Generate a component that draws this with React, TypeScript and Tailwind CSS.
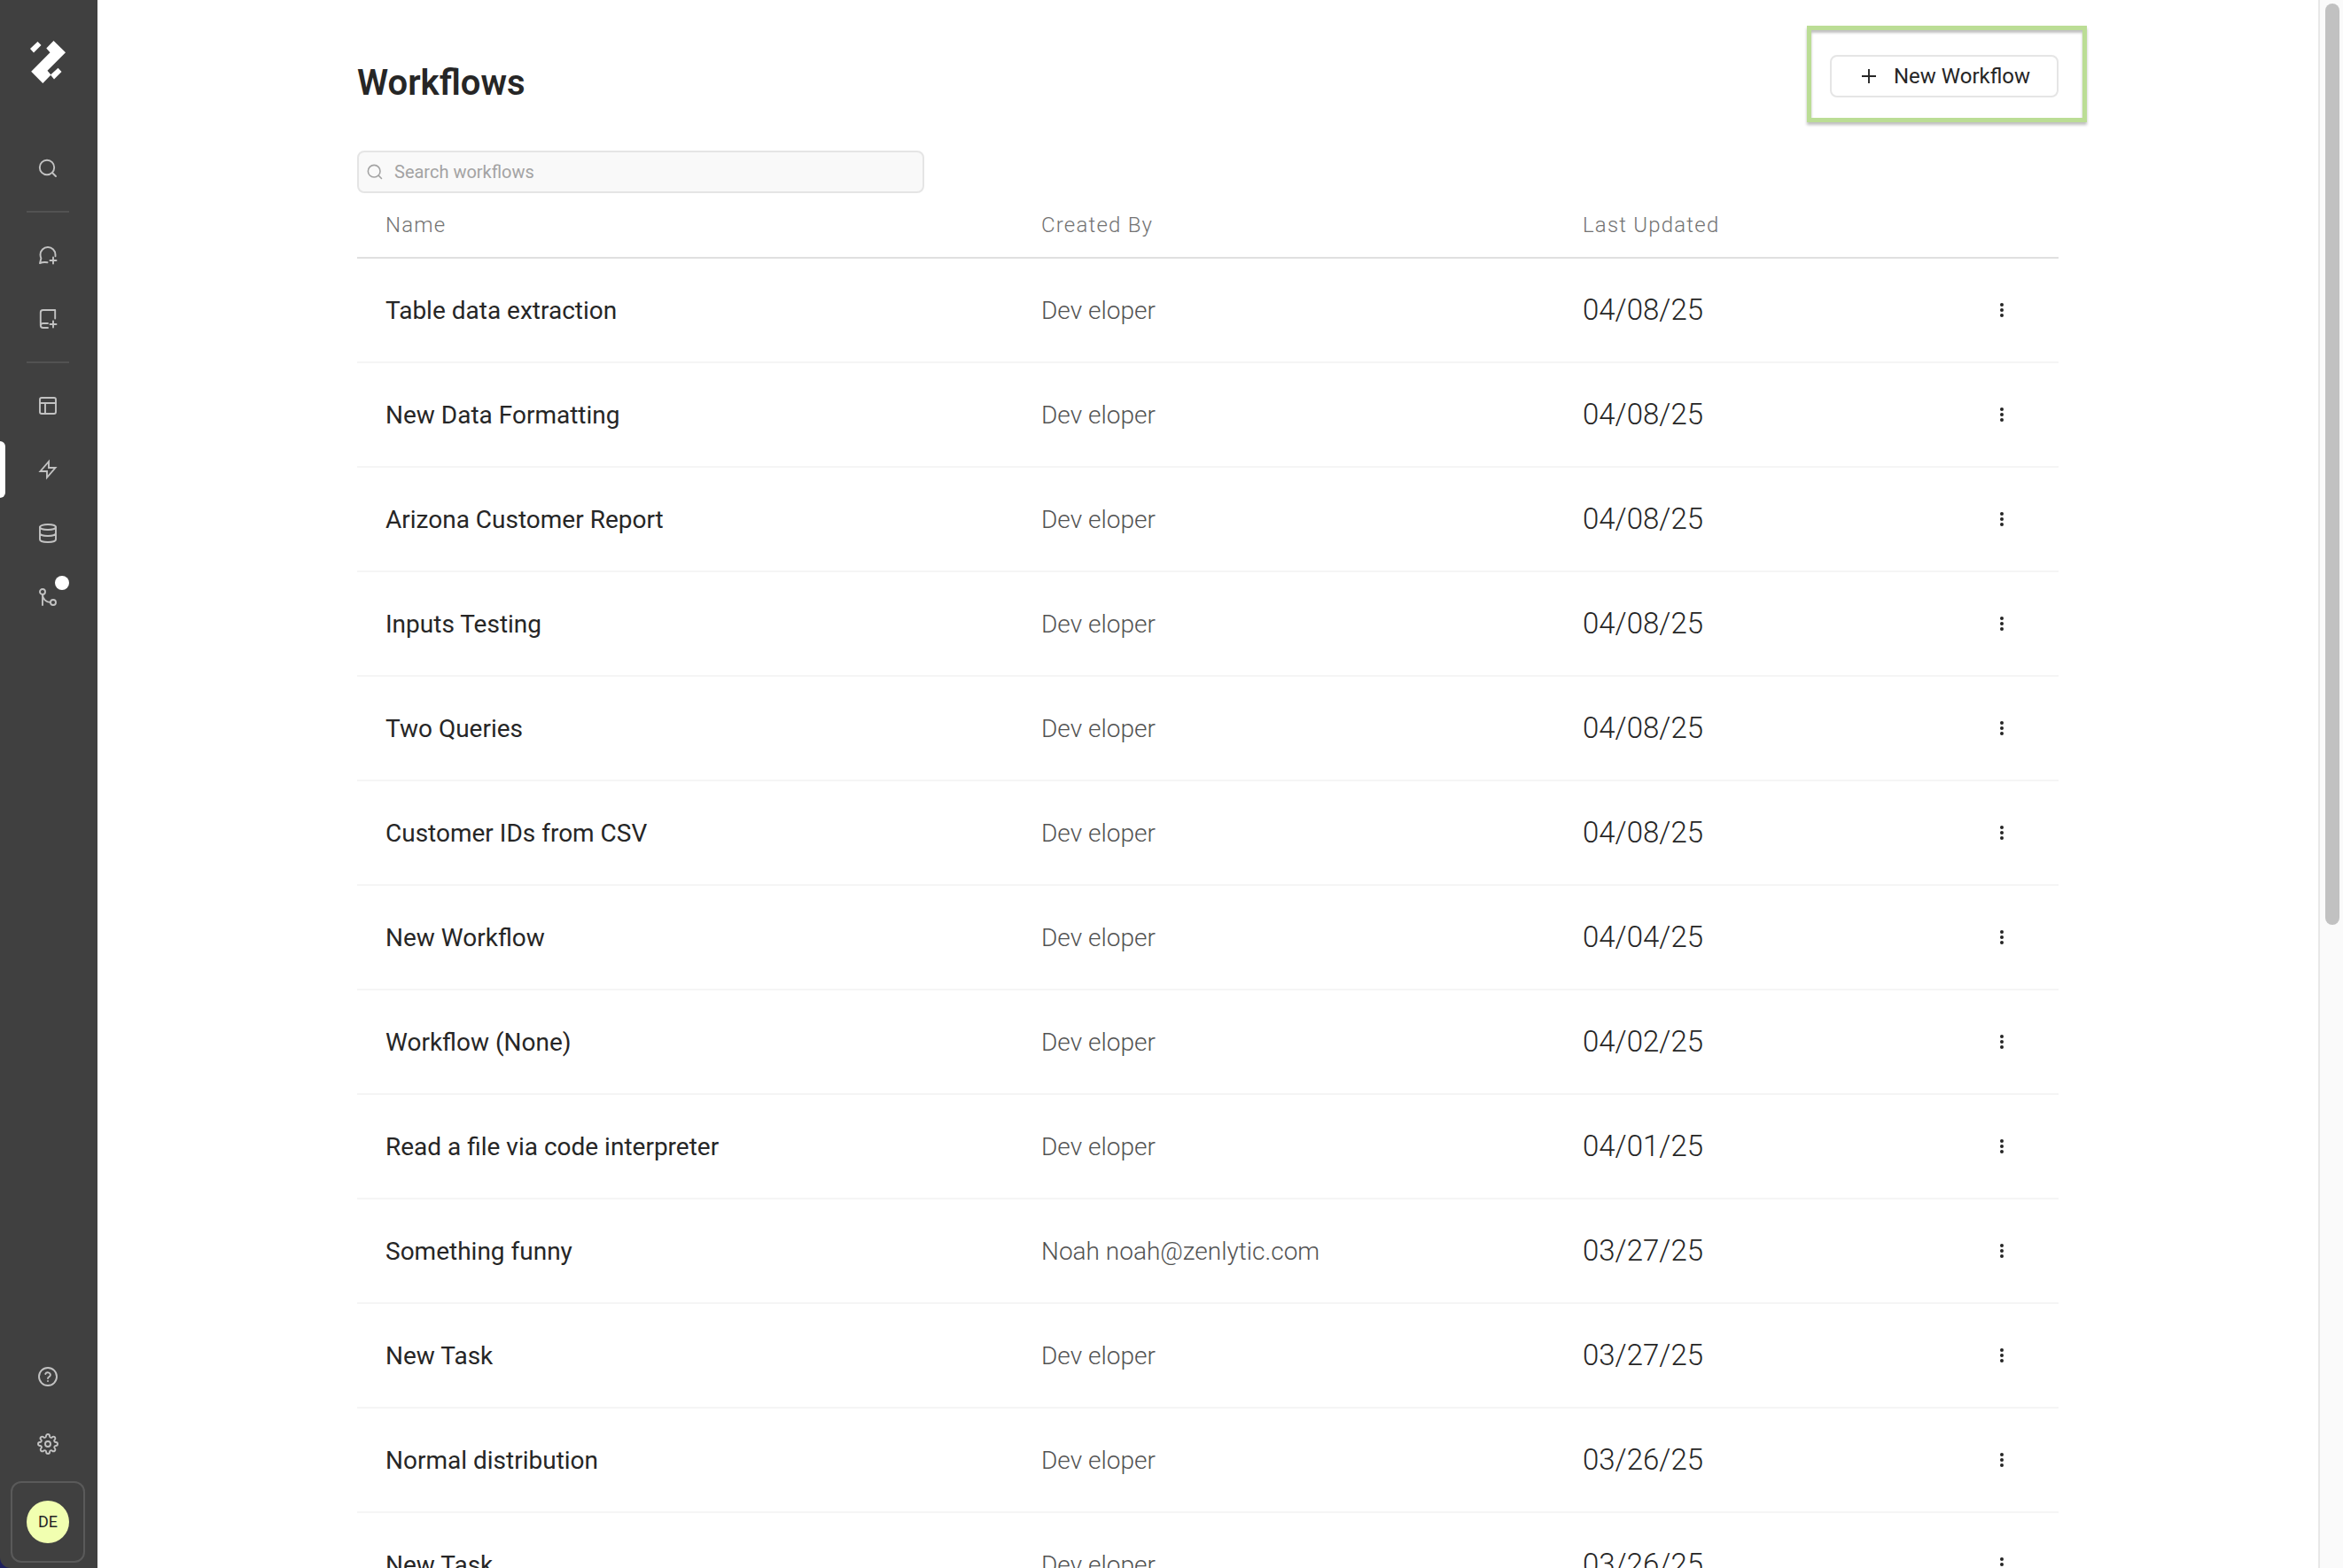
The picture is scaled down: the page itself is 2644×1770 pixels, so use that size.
import { useState } from "react";
import type { ReactNode } from "react";

const workflows = [
  { name: "Table data extraction", by: "Dev eloper", date: "04/08/25" },
  { name: "New Data Formatting", by: "Dev eloper", date: "04/08/25" },
  { name: "Arizona Customer Report", by: "Dev eloper", date: "04/08/25" },
  { name: "Inputs Testing", by: "Dev eloper", date: "04/08/25" },
  { name: "Two Queries", by: "Dev eloper", date: "04/08/25" },
  { name: "Customer IDs from CSV", by: "Dev eloper", date: "04/08/25" },
  { name: "New Workflow", by: "Dev eloper", date: "04/04/25" },
  { name: "Workflow (None)", by: "Dev eloper", date: "04/02/25" },
  { name: "Read a file via code interpreter", by: "Dev eloper", date: "04/01/25" },
  { name: "Something funny", by: "Noah noah@zenlytic.com", date: "03/27/25" },
  { name: "New Task", by: "Dev eloper", date: "03/27/25" },
  { name: "Normal distribution", by: "Dev eloper", date: "03/26/25" },
  { name: "New Task", by: "Dev eloper", date: "03/26/25" },
];

function Icon({ children, className = "size-6" }: { children: ReactNode; className?: string }) {
  return (
    <svg
      viewBox="0 0 24 24"
      fill="none"
      stroke="currentColor"
      strokeWidth="1.9"
      strokeLinecap="round"
      strokeLinejoin="round"
      className={className}
      aria-hidden="true"
    >
      {children}
    </svg>
  );
}

function NavButton({ label, active, badge, children }: { label: string; active?: boolean; badge?: boolean; children: ReactNode }) {
  return (
    <button type="button" aria-label={label} className="relative flex h-16 w-full items-center justify-center text-[#c2c2c2]">
      {active && <span className="absolute inset-y-0 left-0 w-1.5 rounded-r-lg bg-white" />}
      {children}
      {badge && <span className="absolute top-2 right-[30px] size-4 rounded-full bg-white" />}
    </button>
  );
}

function SearchGlyph() {
  return (
    <>
      <circle cx="11" cy="11" r="8.2" />
      <path d="m17 17 4 4" />
    </>
  );
}

function Sidebar() {
  return (
    <aside className="flex w-[110px] shrink-0 flex-col items-center rounded-bl-xl bg-[#404040] pr-0.5 pb-1.5">
      <a href="#home" aria-label="Home" className="mt-[45px] flex h-[50px] items-center">
        <svg viewBox="0 0 40 50" className="h-[50px] w-10" fill="#fff" aria-hidden="true">
          <path d="M0 10 8.5 2 12.5 6 4 14.5Z" />
          <path d="M26.500 1 40 14.200 19.500 34.700 23.500 39.500 14.300 49 1.200 35.800 22.500 14.200 18.300 9.500Z" />
          <path d="M23 39.500 31.500 31.800 35.500 36 27 44.500Z" />
        </svg>
      </a>
      <nav className="mt-[63px] flex w-full flex-col items-center">
        <NavButton label="Search">
          <Icon>
            <SearchGlyph />
          </Icon>
        </NavButton>
        <hr className="my-4 w-12 border-t-2 border-[#525252]" />
        <NavButton label="New chat">
          <Icon>
            <path d="M20.500 13.200V11.500a8.500 8.500 0 0 0-17 0c0 1.600.5 3 .9 4L3 21.200c1.800-.8 4.500-1.600 8.500-.9" />
            <path d="M18 14.500v7M14.500 18h7" />
          </Icon>
        </NavButton>
        <div className="h-2" />
        <NavButton label="New notebook">
          <Icon>
            <path d="M20.200 11.500V2H6.500A2.700 2.700 0 0 0 3.800 4.700v14.600A2.700 2.700 0 0 0 6.500 22H12M12 17H6.500a2.500 2.500 0 0 0-2.500 2" />
            <path d="M18 14.500v7M14.500 18h7" />
          </Icon>
        </NavButton>
        <hr className="my-4 w-12 border-t-2 border-[#525252]" />
        <div className="flex w-full flex-col gap-2">
          <NavButton label="Dashboards">
            <Icon>
              <rect x="3" y="3" width="18" height="18" rx="2" />
              <path d="M3 9h18M9 21V9" />
            </Icon>
          </NavButton>
          <NavButton label="Workflows" active>
            <Icon>
              <path d="M13 3 3.500 14H11v7l9.500-11H13Z" strokeLinejoin="miter" />
            </Icon>
          </NavButton>
          <NavButton label="Data sources">
            <Icon>
              <ellipse cx="12" cy="5" rx="9" ry="3" />
              <path d="M3 5v14c0 1.700 4 3 9 3s9-1.300 9-3V5M3 12c0 1.700 4 3 9 3s9-1.300 9-3" />
            </Icon>
          </NavButton>
          <NavButton label="Branches" badge>
            <Icon>
              <circle cx="6" cy="6" r="3" />
              <circle cx="18" cy="18" r="3" />
              <path d="M6 9v12M6 9c0 5 4 9 9 9" />
            </Icon>
          </NavButton>
        </div>
      </nav>
      <div className="mt-auto flex w-full flex-col items-center">
        <NavButton label="Help">
          <Icon>
            <circle cx="12" cy="12" r="10" />
            <path d="M9.200 9a3 3 0 0 1 5.700 1c0 2-2.900 2.300-2.900 4M12 17h.01" />
          </Icon>
        </NavButton>
        <div className="h-3" />
        <NavButton label="Settings">
          <Icon>
            <circle cx="12" cy="12" r="3" />
            <path d="M19.400 15a1.650 1.650 0 0 0 .33 1.820l.06.06a2 2 0 1 1-2.830 2.830l-.06-.06a1.650 1.650 0 0 0-2.800 1.170V21a2 2 0 0 1-4 0v-.09a1.650 1.650 0 0 0-2.880-1.200l-.06.06a2 2 0 1 1-2.830-2.830l.06-.06A1.650 1.650 0 0 0 3.100 14H3a2 2 0 0 1 0-4h.09a1.650 1.650 0 0 0 1.200-2.880l-.06-.06a2 2 0 1 1 2.830-2.830l.06.06A1.650 1.650 0 0 0 10 3.090V3a2 2 0 0 1 4 0v.09a1.650 1.650 0 0 0 2.880 1.200l.06-.06a2 2 0 1 1 2.830 2.830l-.06.06A1.650 1.650 0 0 0 20.910 10H21a2 2 0 0 1 0 4h-.09a1.650 1.650 0 0 0-1.510 1Z" />
          </Icon>
        </NavButton>
        <button type="button" aria-label="Account" className="mt-2.5 flex h-[92px] w-[84px] items-center justify-center rounded-xl border-2 border-[#5a5a5a]">
          <span className="flex size-12 items-center justify-center rounded-full bg-[#f1ffb0] text-lg text-[#262626]">DE</span>
        </button>
      </div>
    </aside>
  );
}

export default function App() {
  const [query, setQuery] = useState("");
  const rows = workflows.filter((w) => w.name.toLowerCase().includes(query.toLowerCase()));
  return (
    <div className="flex h-screen overflow-hidden bg-[#1d1f5e] font-[Roboto,'Liberation_Sans',sans-serif] text-[#262626]">
      <Sidebar />
      <main className="min-w-0 flex-1 overflow-hidden bg-white">
        <div className="mx-auto w-full max-w-[1920px]">
          <header className="relative flex h-[170px] items-start justify-between pt-[62px]">
            <h1 className="text-[40px] leading-[64px] font-semibold">Workflows</h1>
            <button type="button" className="flex h-12 w-[258px] items-center justify-center gap-4 rounded-lg border-2 border-[#e5e5e5] text-2xl">
              <Icon>
                <path d="M12 4v16M4 12h16" strokeLinecap="butt" />
              </Icon>
              New Workflow
            </button>
            <div className="pointer-events-none absolute top-[29px] -right-8 h-[109px] w-[316px] border-x-5 border-y-5 border-[#bbdd95] shadow-[0_3px_3px_rgba(0,0,0,0.25),inset_0_3px_3px_rgba(0,0,0,0.25)]" />
          </header>
          <label className="flex h-12 w-[640px] items-center gap-3 rounded-lg border-2 border-[#e5e5e5] bg-[#f9f9f9] px-2 text-[#a3a3a3]">
            <Icon className="size-5">
              <SearchGlyph />
            </Icon>
            <input
              type="text"
              aria-label="Search workflows"
              placeholder="Search workflows"
              value={query}
              onChange={(e) => setQuery(e.target.value)}
              className="min-w-0 flex-1 bg-transparent text-xl text-[#262626] outline-none placeholder:text-[#a3a3a3]"
            />
          </label>
          <table className="w-full table-fixed border-separate border-spacing-0 text-left">
            <colgroup>
              <col className="w-[740px]" />
              <col className="w-[611px]" />
              <col />
              <col className="w-32" />
            </colgroup>
            <thead>
              <tr className="h-[74px] text-2xl text-[#737373] [&>th]:border-b-2 [&>th]:border-[#e0e0e0] [&>th]:font-light [&>th]:tracking-wider">
                <th scope="col" className="pl-8">Name</th>
                <th scope="col" className="pl-8">Created By</th>
                <th scope="col" className="pl-8">Last Updated</th>
                <th scope="col" aria-label="Actions" />
              </tr>
            </thead>
            <tbody>
              {rows.map((w, i) => (
                <tr key={i} className="h-[118px] [&>td]:border-b-2 [&>td]:border-[#f5f5f5]">
                  <td className="pt-0.5 pl-8 text-[28px]">{w.name}</td>
                  <td className="pt-0.5 pl-8 text-[28px] font-light text-[#525252]">{w.by}</td>
                  <td className="pl-8 text-[33px] font-light">{w.date}</td>
                  <td>
                    <button type="button" aria-label={`Actions for ${w.name}`} className="mx-auto flex size-12 items-center justify-center">
                      <svg viewBox="0 0 4 16" className="h-4 w-1" fill="#262626" aria-hidden="true">
                        <circle cx="2" cy="2" r="2" />
                        <circle cx="2" cy="8" r="2" />
                        <circle cx="2" cy="14" r="2" />
                      </svg>
                    </button>
                  </td>
                </tr>
              ))}
            </tbody>
          </table>
        </div>
      </main>
      <div className="flex w-7 shrink-0 justify-end border-l-2 border-[#e8e8e8] bg-[#fafafa] pt-1 pr-1">
        <div className="h-[1040px] w-4 rounded-full bg-[#c1c1c1]" />
      </div>
    </div>
  );
}
